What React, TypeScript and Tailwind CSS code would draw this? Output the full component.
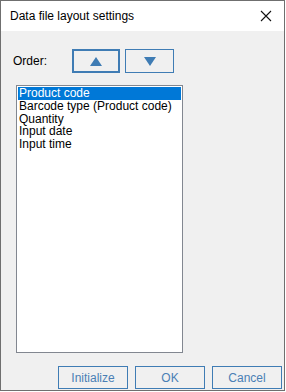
const font = "font-['Liberation_Sans',Arial,sans-serif]";

const items = [
  'Product code',
  'Barcode type (Product code)',
  'Quantity',
  'Input date',
  'Input time',
];

const App = () => {
  return (
    <div className={`w-[286px] h-[392px] bg-white ${font} text-[12px] text-black`}>
      <div className="w-[285px] h-[391px] border border-[#6f6f6f] flex flex-col bg-[#f0f0f0]">
        {/* Title bar */}
        <div className="h-[30px] bg-white flex items-center justify-between pl-[9px] pr-[9px] shrink-0">
          <span className="text-[12px] leading-none">Data file layout settings</span>
          <svg width="12" height="12" viewBox="0 0 12 12" className="mr-[3px]">
            <path d="M1 1L11 11M11 1L1 11" stroke="#111" strokeWidth="1.1" fill="none" />
          </svg>
        </div>

        {/* Body */}
        <div className="flex-1 flex flex-col">
          <div className="flex items-center mt-[18px] ml-[12px]">
            <span className="w-[59px]">Order:</span>
            <button className="w-[48px] h-[24px] border-2 border-[#3f7cb4] flex items-center justify-center">
              <svg width="12" height="9" viewBox="0 0 12 9">
                <path d="M6 0L12 9H0Z" fill="#3f7cb4" />
              </svg>
            </button>
            <button className="w-[49px] h-[24px] ml-[5px] border border-[#3f7cb4] flex items-center justify-center">
              <svg width="12" height="9" viewBox="0 0 12 9">
                <path d="M0 0H12L6 9Z" fill="#3f7cb4" />
              </svg>
            </button>
          </div>

          <div className="ml-[15px] mt-[12px] w-[167px] h-[268px] bg-white border border-[#828790] p-px">
            {items.map((t, i) => (
              <div
                key={t}
                className={
                  i === 0
                    ? 'h-[13px] leading-[13px] bg-[#0078d7] text-white pl-[1px] whitespace-nowrap'
                    : 'h-[12.5px] leading-[12.5px] pl-[1px] whitespace-nowrap'
                }
              >
                {t}
              </div>
            ))}
          </div>

          <div className="flex justify-end gap-[7px] mt-[13px] pr-[2px]">
            {['Initialize', 'OK', 'Cancel'].map((b) => (
              <button
                key={b}
                className="w-[70px] h-[23px] border border-[#3f7cb4] text-[#4a7fb5] text-[12px] leading-none"
              >
                {b}
              </button>
            ))}
          </div>
        </div>
      </div>
    </div>
  );
};

export default App;
